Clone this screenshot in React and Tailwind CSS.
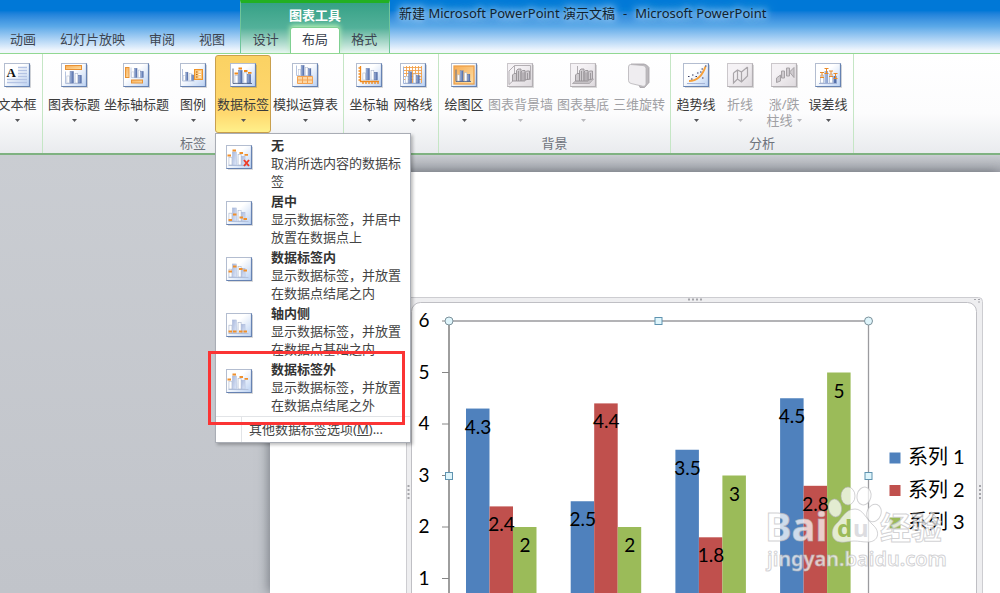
import React from 'react';

const tabs = ['动画', '幻灯片放映', '审阅', '视图'];
const contextTabs = ['设计', '布局', '格式'];

const menuItems = [
  { icon: 'none', title: '无', text: '取消所选内容的数据标签' },
  { icon: 'center', title: '居中', text: '显示数据标签，并居中放置在数据点上' },
  { icon: 'insideEnd', title: '数据标签内', text: '显示数据标签，并放置在数据点结尾之内' },
  { icon: 'insideBase', title: '轴内侧', text: '显示数据标签，并放置在数据点基础之内' },
  { icon: 'outsideEnd', title: '数据标签外', text: '显示数据标签，并放置在数据点结尾之外' },
];

const series = [
  { name: '系列 1', color: '#4f81bd' },
  { name: '系列 2', color: '#c0504d' },
  { name: '系列 3', color: '#9bbb59' },
];

const values = [
  [4.3, 2.4, 2],
  [2.5, 4.4, 2],
  [3.5, 1.8, 3],
  [4.5, 2.8, 5],
];

const Gradients = () => (
  <svg width="0" height="0" className="absolute" aria-hidden="true">
    <defs>
      <linearGradient id="tile" x1="0" y1="0" x2="1" y2="1">
        <stop offset="0.4" stopColor="#ffffff" />
        <stop offset="1" stopColor="#b9d0f2" />
      </linearGradient>
      <linearGradient id="tileOff" x1="0" y1="0" x2="1" y2="1">
        <stop offset="0.3" stopColor="#f5f2f5" />
        <stop offset="1" stopColor="#dedade" />
      </linearGradient>
      <linearGradient id="bar" x1="0" y1="0" x2="1" y2="0">
        <stop offset="0" stopColor="#a9bce0" />
        <stop offset="1" stopColor="#4a66a4" />
      </linearGradient>
      <linearGradient id="softBar" x1="0" y1="0" x2="1" y2="1">
        <stop offset="0" stopColor="#a9b8dc" />
        <stop offset="1" stopColor="#dfe8f8" />
      </linearGradient>
      <linearGradient id="orange" x1="0" y1="0" x2="1" y2="1">
        <stop offset="0" stopColor="#f8ac54" />
        <stop offset="1" stopColor="#fde0a8" />
      </linearGradient>
    </defs>
  </svg>
);

const Tile = ({ off, children }) => (
  <svg width="27" height="25" viewBox="0 0 27 25" className="shrink-0" aria-hidden="true">
    <path d="M2 24.5h24.5V2" fill="none" stroke="#000" strokeOpacity="0.14" />
    <rect x="0.5" y="0.5" width="25" height="23" fill={off ? 'url(#tileOff)' : 'url(#tile)'} stroke={off ? '#cbc7cb' : '#b3bdd0'} />
    <path d="M0.5 23.5h25V0.5" fill="none" stroke={off ? '#b3afb3' : '#6682b2'} strokeWidth="1.2" />
    {children}
  </svg>
);

// Four clustered columns standing on (x, y)
const Bars = ({ x, y, s = 1, soft }) => (
  <g transform={`translate(${x} ${y}) scale(${s})`}>
    <rect x="0.5" y="-9" width="3.5" height="9" fill="#fff" stroke="#a9b5cc" strokeWidth="0.7" />
    <rect x="4.5" y="-15" width="4.5" height="15" fill={soft ? 'url(#softBar)' : 'url(#bar)'} stroke={soft ? '#a3b3d6' : '#6379a8'} strokeWidth="0.5" />
    <rect x="11" y="-12" width="3.5" height="12" fill="#fff" stroke="#a9b5cc" strokeWidth="0.7" />
    <rect x="15" y="-10" width="4" height="10" fill={soft ? 'url(#softBar)' : 'url(#bar)'} stroke={soft ? '#a3b3d6' : '#4a629c'} strokeWidth="0.5" />
  </g>
);

const Axes = ({ x, y, w = 18, h = 15, color = '#5c6c8c' }) => (
  <path d={`M${x} ${y - h}v${h}h${w}`} fill="none" stroke={color} />
);

const GreyBars = () => (
  <g fill="#cfcbcf" stroke="#979397" strokeWidth="0.9">
    <path d="M5.5 18v-6l1.500-1.500h2.500v7.500zM9.500 18V7.500L11 6h3v12zM14 18V9l1.500-1.500h2.500V18zM18 17V9.500L19.500 8h3v8z" />
    <path d="M11.500 18V8M16 18V9.500M20.500 17v-7" fill="none" />
  </g>
);

const RibbonIcon = ({ name }) => {
  switch (name) {
    case 'textbox':
      return (
        <Tile>
          <path d="M14 4.500h9M14 7.500h9M14 10.500h9M14 13.500h9M3 16.500h20M3 19.500h20" stroke="#b4c3e4" strokeWidth="1.300" />
          <text x="2.500" y="14" fontSize="13" fontWeight="700" fontFamily="'Liberation Serif', serif" fill="#111">A</text>
        </Tile>
      );
    case 'title':
      return (
        <Tile>
          <rect x="4.500" y="2.500" width="16" height="4" fill="url(#orange)" stroke="#e89234" />
          <Axes x={4.5} y={20.5} w={17} h={12} color="#b5c3de" />
          <Bars x={5.5} y={20} s={0.78} />
        </Tile>
      );
    case 'axisTitle':
      return (
        <Tile>
          <rect x="2.500" y="4.500" width="3.500" height="10" fill="url(#orange)" stroke="#e89234" />
          <rect x="8.500" y="17" width="11" height="3" fill="url(#orange)" stroke="#e89234" />
          <Axes x={8} y={14.5} w={13} h={10} color="#c6d0e4" />
          <Bars x={8.5} y={14.5} s={0.62} />
        </Tile>
      );
    case 'legend':
      return (
        <Tile>
          <Axes x={2.5} y={18} w={12} h={12} color="#b5c3de" />
          <Bars x={3} y={17.5} s={0.56} />
          <rect x="14.500" y="6.500" width="8" height="10" fill="#fbc77c" stroke="#ef9428" />
          <path d="M16 9h1.500M16 11.500h1.500M16 14h1.500" stroke="#b8620c" />
          <path d="M18.500 9H21M18.500 11.500H21M18.500 14H21" stroke="#fff" />
        </Tile>
      );
    case 'labels':
      return (
        <Tile>
          <Axes x={3} y={20.5} w={19} h={15} />
          <Bars x={4.5} y={20} s={0.85} />
          <path d="M4.500 10.500h3.500M8.500 5.500h3.500M14 8h3.500M18 9.800h3.500" stroke="#f08a1c" strokeWidth="1.800" />
        </Tile>
      );
    case 'table':
      return (
        <Tile>
          <Axes x={4.5} y={12.5} w={16} h={10} color="#b5c3de" />
          <Bars x={6} y={12.5} s={0.68} />
          <path d="M5.500 13.500h15v7h-15zM5.500 17h15M10.500 13.500v7M15.500 13.500v7" fill="#fdd7a4" stroke="#f3a352" />
        </Tile>
      );
    case 'axes':
      return (
        <Tile>
          <Bars x={6.5} y={17} s={0.78} />
          <path d="M4.500 3v15.500H23M2.500 5H4M2.500 8H4M2.500 11H4M2.500 14H4M2.500 17H4M7 19v2M10 19v2M13 19v2M16 19v2M19 19v2M22 19v2" fill="none" stroke="#f08a1c" strokeWidth="1.300" />
        </Tile>
      );
    case 'grid':
      return (
        <Tile>
          <path d="M4 4.500h18M4 7.500h18M4 10.500h18M4 13.500h18M4 16.500h18M6.500 3v17M9.500 3v17M12.500 3v17M15.500 3v17M18.500 3v17M21.500 3v17" stroke="#f3a24c" strokeWidth="0.900" />
          <Axes x={3.5} y={20.5} w={18} h={17} color="#9fb2d8" />
          <Bars x={5} y={20} s={0.75} />
        </Tile>
      );
    case 'plotArea':
      return (
        <Tile>
          <rect x="3" y="3" width="20" height="18" fill="url(#orange)" stroke="#eda04a" strokeWidth="1.300" />
          <Axes x={5} y={18.5} w={15} h={12} />
          <Bars x={6} y={18} s={0.68} />
        </Tile>
      );
    case 'wall':
      return (
        <Tile off>
          <path d="M7.500 2.500h16v14h-16zM7.500 16.500L2 21.500M2 21.500V8l5.500-5.500" fill="none" stroke="#b3afb3" />
          <GreyBars />
        </Tile>
      );
    case 'floor':
      return (
        <Tile off>
          <path d="M7.500 3v11M2.500 20.500L8 16h15.500l-4 4.500z" fill="#c4c0c4" stroke="#b0acb0" />
          <GreyBars />
        </Tile>
      );
    case 'rotate':
      return (
        <svg width="27" height="25" viewBox="0 0 27 25" aria-hidden="true">
          <path d="M5 1h13q3 .5 5 3.500v15l-4.500 5H14z" fill="#bcb9bd" stroke="#a3a0a4" strokeWidth="0.800" />
          <path d="M4.500 1.500L17 2.500q3 .3 3 3v15.500q-.2 2.800-3 2.300L5 20.500q-2.500-.6-2.500-3V4Q2.500 1.500 4.500 1.500z" fill="#efedf0" stroke="#b5b2b6" strokeWidth="0.800" />
        </svg>
      );
    case 'trend':
      return (
        <Tile>
          <path d="M4 20.500h18" stroke="#a3b3d6" />
          <path d="M6 18c8 0 13-4 16.500-14.500" fill="none" stroke="#f7a13c" strokeWidth="2" />
          <path d="M5 13.500h1.500M8 16h1.500M9 12h1.500M12.500 13.500H14M14 10h1.500M17 9h1.500M18.500 6H20M19 15h1.500M22 3h1.500" stroke="#30365c" strokeWidth="1.200" />
        </Tile>
      );
    case 'lines':
      return (
        <Tile off>
          <path d="M6.500 10l4-3 4 2 6-5M6.500 10v10l4-4 4 3 6-6V4M10.500 7v9M14.500 9v10" fill="none" stroke="#aaa6aa" strokeWidth="1.200" />
        </Tile>
      );
    case 'updown':
      return (
        <Tile off>
          <path d="M5.500 15l4-3v6l-4 1.500zM10.500 8h3v7h-3zM15.500 5h3v8h-3zM18.500 9L23 4.500v10z" fill="#cfcbcf" stroke="#a6a2a6" />
        </Tile>
      );
    case 'error':
      return (
        <Tile>
          <path d="M4 20.500h18" stroke="#a3b3d6" />
          <path d="M5.500 12h3v8h-3zM14.500 11h3v9h-3z" fill="#fff" stroke="#a9b5cc" strokeWidth="0.700" />
          <path d="M9.500 8h3.500v12H9.500zM18.500 13h3v7h-3z" fill="url(#bar)" />
          <path d="M5 9.500h4M5 14.500h4M7 9.500v5M9.500 5.500h4M9.500 10.500h4M11.500 5.500v5M14 8h4M14 13.500h4M16 8v5.500M18.500 10.500h4M18.500 15.500h4M20.500 10.500v5" stroke="#ea8a28" />
        </Tile>
      );
    default:
      return null;
  }
};

const labelMarks = {
  none: 'M1.500 10.500h3.500M6.500 5.500h3.500M13.500 8h3.500M18.500 9.800h3.500',
  center: 'M2.500 19h3.500M7 13.500h3.500M13.500 16.500h3.500M17.500 18h3.500',
  insideEnd: 'M2.500 14.500h3.500M7 9.500h3.500M13 12h3.500M17.500 13.500h3.500',
  insideBase: 'M2.500 18.500h3.500M7 18.500h3.500M13 18.500h3.500M17.500 18.500h3.500',
  outsideEnd: 'M1.500 10.500h3.500M6.500 5.500h3.500M13.500 8h3.500M18.500 9.800h3.500',
};

const LabelIcon = ({ kind }) => (
  <Tile>
    <path d="M2.500 20.500h20" stroke="#b5c3de" />
    <Bars x={2.5} y={20} s={0.87} soft />
    <path d={labelMarks[kind]} stroke="#f0902c" strokeWidth="1.800" />
    {kind === 'none' && <path d="M18 15l5 6M23 15l-5 6" stroke="#ee3a24" strokeWidth="1.900" />}
  </Tile>
);

const Arrow = ({ off }) => (
  <svg width="5" height="3" viewBox="0 0 5 3" aria-hidden="true">
    <path d="M0 0h5L2.500 3z" fill={off ? '#b9b9bd' : '#55565a'} />
  </svg>
);

const RibbonButton = ({ icon, label, label2, off, active, noArrow }) => (
  <button
    type="button"
    disabled={off}
    className={`flex flex-col items-center h-[78px] min-w-11 shrink-0 pt-[7px] px-px text-[13px] leading-[18px] whitespace-nowrap rounded-[3px] border ${
      active
        ? 'border-[#c9a04e] bg-linear-to-b from-[#fbd264] from-5% via-[#ffd86f] via-75% to-[#fff08a] text-[#3b3b3b]'
        : 'border-transparent'
    } ${off ? 'text-[#a0a0a4]' : 'text-[#3b3b3b]'}`}
  >
    <RibbonIcon name={icon} />
    <span className="mt-[7px]">{label}</span>
    {!noArrow && (
      <span className="flex h-[14px] items-center gap-1">
        {label2}
        <Arrow off={off} />
      </span>
    )}
  </button>
);

const Group = ({ title, children }) => (
  <div className="flex flex-col shrink-0 px-[3px] pt-px border-r border-[#c5e6c5]">
    <div className="flex flex-1">{children}</div>
    <div className="h-5 text-center text-[13px] leading-5 text-[#6e737c]">{title}</div>
  </div>
);

const LabelsMenu = () => (
  <div className="absolute left-0 top-full z-20 w-49 border border-[#a9adb5] bg-white shadow-[2px_2px_3px_rgba(0,0,0,0.25)]">
    <div className="pt-[2px]">
      {menuItems.map((item) => (
        <button key={item.icon} type="button" className="flex h-14 w-full gap-[18px] pl-[10px] text-left">
          <span className="pt-[9px]">
            <LabelIcon kind={item.icon} />
          </span>
          <span className="flex w-[132px] flex-col text-[13px] leading-[18px] text-[#444]">
            <span className="font-bold text-[#333]">{item.title}</span>
            <span>{item.text}</span>
          </span>
        </button>
      ))}
    </div>
    <button type="button" className="flex h-[26px] w-full border-t border-[#e2e4e7] pl-[25px] text-[13px] leading-6 text-[#444]">
      <span className="border-l border-[#e2e4e7] pl-[7px]">
        其他数据标签选项(<u>M</u>)...
      </span>
    </button>
    <div className="pointer-events-none absolute -left-2 top-[217px] h-[74px] w-[197px] border-3 border-[#fb3434]"></div>
  </div>
);

const TitleBar = () => (
  <header className="flex h-[53px] shrink-0 bg-linear-to-b from-[#0078d7] from-20% via-[#5ba9e8] via-50% to-[#f0f6fd] to-95% text-[13px] text-[#3c4450]">
    <nav className="flex w-60 shrink-0 items-end overflow-hidden pr-[3px] justify-end">
      {tabs.map((tab) => (
        <button key={tab} type="button" className="h-[26px] shrink-0 px-3">{tab}</button>
      ))}
    </nav>
    <div className="flex w-[150px] shrink-0 flex-col justify-between border-x border-t-3 border-x-[#6fc59a] border-t-[#22b022] bg-linear-to-b from-[#35a186] via-[#53b19a] via-50% to-[#e6f6f0]">
      <div className="text-center leading-6 font-bold text-white">图表工具</div>
      <nav className="flex">
        {contextTabs.map((tab) => (
          <button
            key={tab}
            type="button"
            className={`h-[26px] w-[50px] ${tab === '布局' ? 'rounded-t-[3px] border border-b-0 border-[#7fd092] bg-white pb-[2px] shadow-[0_-2px_5px_#b5f0b5]' : ''}`}
          >
            {tab}
          </button>
        ))}
      </nav>
    </div>
    <h1 className="pl-[9px] leading-[26px] whitespace-nowrap text-[#10222f] [text-shadow:0_0_6px_#b5dcf8,0_0_10px_#b5dcf8,0_0_14px_#9ccbf0]">
      新建 Microsoft PowerPoint 演示文稿<span className="mx-2">-</span>Microsoft PowerPoint
    </h1>
  </header>
);

const Ribbon = () => (
  <div className="flex h-[102px] shrink-0 border-t border-b-2 border-t-[#92d892] border-b-[#7fb281] bg-linear-to-b from-white via-[#fcfcfd] via-60% to-[#e9ebee]">
    <div className="flex w-[43px] shrink-0 justify-end overflow-hidden border-r border-[#c5e6c5] px-[3px] pt-px">
      <RibbonButton icon="textbox" label="文本框" />
    </div>
    <Group title="标签">
      <RibbonButton icon="title" label="图表标题" />
      <RibbonButton icon="axisTitle" label="坐标轴标题" />
      <RibbonButton icon="legend" label="图例" />
      <div className="relative h-[78px]">
        <RibbonButton icon="labels" label="数据标签" active />
        <LabelsMenu />
      </div>
      <RibbonButton icon="table" label="模拟运算表" />
    </Group>
    <Group title="坐标轴">
      <RibbonButton icon="axes" label="坐标轴" />
      <RibbonButton icon="grid" label="网格线" />
    </Group>
    <Group title="背景">
      <RibbonButton icon="plotArea" label="绘图区" />
      <RibbonButton icon="wall" label="图表背景墙" off />
      <RibbonButton icon="floor" label="图表基底" off />
      <RibbonButton icon="rotate" label="三维旋转" off noArrow />
    </Group>
    <Group title="分析">
      <RibbonButton icon="trend" label="趋势线" />
      <RibbonButton icon="lines" label="折线" off />
      <RibbonButton icon="updown" label="涨/跌" label2="柱线" off />
      <RibbonButton icon="error" label="误差线" />
    </Group>
  </div>
);

const UNIT = 51.5;
const BASE = 333;

const Handle = ({ x, y, round }) => (
  <rect
    x={x - (round ? 4 : 3.5)}
    y={y - (round ? 4 : 3.5)}
    width={round ? 8 : 7}
    height={round ? 8 : 7}
    rx={round ? 4 : 0}
    fill="#dff5fb"
    stroke={round ? '#7d929c' : '#5f93b0'}
  />
);

const Chart = () => (
  <svg viewBox="0 0 577 340" className="block w-full" fontFamily="Lato, 'Noto Sans CJK SC', sans-serif" fontSize="19" fill="#000">
    <rect x="0.500" y="0.500" width="576" height="400" rx="4" fill="#eeeef0" stroke="#cdcdd1" />
    <rect x="5.500" y="5.500" width="565" height="400" rx="9" fill="#fff" stroke="#bfbfc4" />
    <path d="M282 2.500h14" stroke="#a5a5aa" strokeWidth="2" strokeDasharray="2 2" />
    <path d="M2.500 188v14M574 188v14" stroke="#a5a5aa" strokeWidth="2" strokeDasharray="2 2" />
    <path d="M568 2.500h6M572 5h3" stroke="#a5a5aa" strokeDasharray="2 2" />

    {values.map((row, i) =>
      row.map((v, j) => (
        <rect key={`${i}-${j}`} x={60 + i * 104.7 + j * 23.5} y={BASE - v * UNIT} width="23.500" height={v * UNIT} fill={series[j].color} />
      ))
    )}
    <path d="M43 24h419.500v320" fill="none" stroke="#9b9b9f" strokeWidth="1.300" />
    <path d="M43 24v320" stroke="#868686" strokeWidth="1.600" />
    {[1, 2, 3, 4, 5, 6].map((n) => (
      <g key={n}>
        <path d={`M36 ${BASE - n * UNIT}h7`} stroke="#868686" />
        <text x="18" y={BASE - n * UNIT + 6} textAnchor="middle">{n}</text>
      </g>
    ))}
    {values.map((row, i) =>
      row.map((v, j) => (
        <text key={`${i}-${j}`} x={72 + i * 104.7 + j * 23.5} y={BASE - v * UNIT + 25} textAnchor="middle">{v}</text>
      ))
    )}
    <Handle x={43} y={24} round />
    <Handle x={462.5} y={24} round />
    <Handle x={252.5} y={24} />
    <Handle x={43} y={179} />
    <Handle x={462.5} y={179} />

    {series.map((s, i) => (
      <g key={s.name}>
        <rect x="483.500" y={155.5 + i * 32.5} width="11" height="11" fill={s.color} />
        <text x="502" y={167 + i * 32.5} fontSize="20">{s.name}</text>
      </g>
    ))}
  </svg>
);

const Watermark = () => (
  <svg width="190" height="90" viewBox="0 0 190 90" className="absolute right-[45px] top-[312px]" aria-hidden="true">
    <g fill="#fff" fillOpacity="0.72" stroke="#b4b4b8" strokeOpacity="0.6" strokeWidth="1" fontFamily="'Noto Sans', 'Noto Sans CJK SC', sans-serif">
      <ellipse cx="70" cy="24" rx="6.500" ry="9" transform="rotate(-10 70 24)" />
      <ellipse cx="83" cy="12" rx="7" ry="9" />
      <ellipse cx="99" cy="12" rx="7" ry="9" transform="rotate(12 99 12)" />
      <ellipse cx="109" cy="29" rx="7" ry="9" transform="rotate(20 109 29)" />
      <path d="M90 25C98 25 101 35 108 41C116 48 113 58 103 58C97 58 94 57 89 57C83 57 80 59 75 58C66 57 65 46 71 40C77 35 80 25 90 25z" />
      <text x="0" y="57" fontSize="40" fontWeight="700">Bai</text>
      <text x="115" y="55" fontSize="31" fontWeight="700">经验</text>
      <text x="2" y="82" fontSize="20" fontWeight="600">jingyan.baidu.com</text>
    </g>
    <text x="72" y="53" fontSize="24" fontWeight="700" fontFamily="'Noto Sans', sans-serif" fill="#9bbb59">d</text>
    <text x="88" y="53" fontSize="24" fontWeight="700" fontFamily="'Noto Sans', sans-serif" fill="#dcdce0">u</text>
  </svg>
);

export default function App() {
  return (
    <div className="flex h-screen flex-col overflow-hidden bg-linear-to-b from-[#cdd0d5] to-[#c1c4ca] font-['Noto_Sans','Noto_Sans_CJK_SC',sans-serif]">
      <Gradients />
      <TitleBar />
      <Ribbon />
      <main className="flex min-h-0 flex-1 flex-col pl-[270px]">
        <div className="h-[17px] shrink-0 bg-linear-to-b from-[#c9ccd1] to-[#a4a7ae]"></div>
        <section className="relative min-h-0 flex-1 bg-white pl-34 pr-[17px] pt-[125px] shadow-[-2px_0_10px_rgba(70,74,84,0.55)]">
          <Chart />
          <Watermark />
        </section>
      </main>
    </div>
  );
}
